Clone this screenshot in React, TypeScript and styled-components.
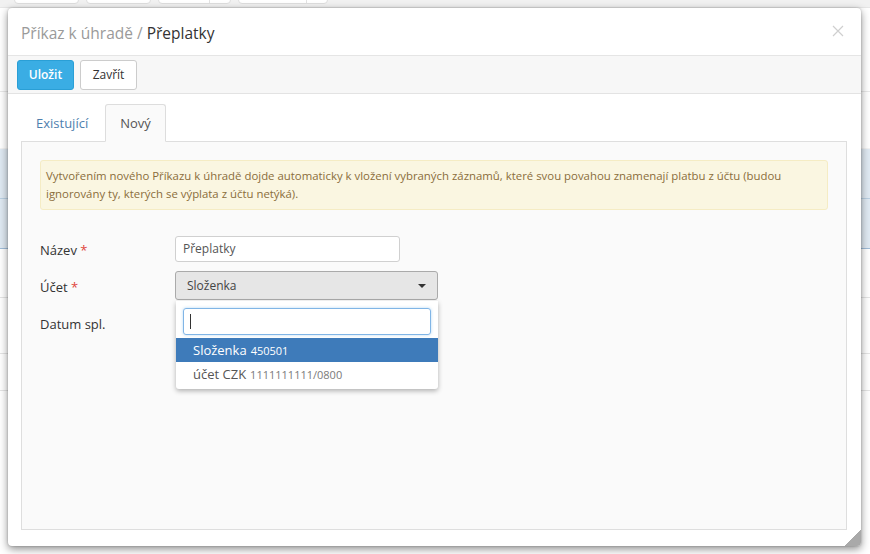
import React from "react";
import styled, { createGlobalStyle } from "styled-components";

const Global = createGlobalStyle`
  html, body { margin: 0; padding: 0; }
  body {
    background: #ffffff;
    font-family: "Open Sans", "Liberation Sans", sans-serif;
    width: 870px;
    height: 554px;
    overflow: hidden;
  }
  * { box-sizing: border-box; }
`;

const Page = styled.div`
  position: relative;
  width: 870px;
  height: 554px;
  overflow: hidden;
  background: #fff;
`;

const TopBar = styled.div`
  height: 8px;
  background: #f1f1f1;
  display: flex;
  align-items: flex-end;
  gap: 7px;
  padding: 0 0 3px 14px;
  overflow: hidden;
  border-bottom: 1px solid #e6e6e6;
`;

const GhostBtn = styled.div<{ $w: number; $split?: number }>`
  flex: none;
  width: ${(p) => p.$w}px;
  height: 24px;
  background: #fff;
  border: 1px solid #dedede;
  border-radius: 4px;
  position: relative;
  ${(p) =>
    p.$split
      ? `&::after{content:"";position:absolute;top:0;bottom:0;left:${p.$split}px;border-left:1px solid #e2e2e2;}`
      : ""}
`;

const Table = styled.div`
  display: flex;
  flex-direction: column;
`;

const BgRow = styled.div<{ $h: number; $blue?: boolean; $line?: string }>`
  height: ${(p) => p.$h}px;
  background: ${(p) => (p.$blue ? "#dfe9f2" : "#fff")};
  border-bottom: 1px solid ${(p) => p.$line || "#e4e4e4"};
`;

const Modal = styled.div`
  position: absolute;
  top: 8px;
  left: 8px;
  width: 853px;
  height: 538px;
  background: #fff;
  border-radius: 4px;
  box-shadow: 0 3px 9px rgba(0, 0, 0, 0.45), 0 0 2px rgba(0, 0, 0, 0.25);
  display: flex;
  flex-direction: column;
`;

const Header = styled.div`
  height: 48px;
  flex: none;
  display: flex;
  align-items: center;
  justify-content: space-between;
  padding: 2px 17px 0 13px;
  border-bottom: 1px solid #e5e5e5;
`;

const Title = styled.div`
  font-size: 15.5px;
  color: #333;
`;

const Muted = styled.span`
  color: #9a9a9a;
`;

const Close = styled.div`
  width: 12px;
  height: 12px;
  display: flex;
  margin-top: -4px;
`;

const Toolbar = styled.div`
  height: 38px;
  flex: none;
  background: #f7f7f7;
  border-bottom: 1px solid #e3e3e3;
  display: flex;
  align-items: center;
  gap: 6px;
  padding: 0 9px;
`;

const Button = styled.button<{ $primary?: boolean }>`
  height: 30px;
  width: 57px;
  padding: 0;
  font-family: inherit;
  font-size: 12px;
  border-radius: 3px;
  border: 1px solid ${(p) => (p.$primary ? "#2a9fd6" : "#ccc")};
  background: ${(p) => (p.$primary ? "#3aade4" : "#fff")};
  color: ${(p) => (p.$primary ? "#fff" : "#333")};
  font-weight: ${(p) => (p.$primary ? 600 : 400)};
`;

const Body = styled.div`
  flex: 1;
  display: flex;
  flex-direction: column;
  padding: 10px 14px 16px 13px;
`;

const Tabs = styled.div`
  display: flex;
  gap: 2px;
  height: 38px;
  flex: none;
  position: relative;
  z-index: 1;
  margin-bottom: -1px;
`;

const Tab = styled.div<{ $active?: boolean }>`
  height: 38px;
  padding: 0 14px;
  display: flex;
  align-items: center;
  font-size: 13px;
  color: ${(p) => (p.$active ? "#555" : "#4f7fae")};
  border: 1px solid ${(p) => (p.$active ? "#ddd" : "transparent")};
  border-bottom-color: ${(p) => (p.$active ? "#fafafa" : "transparent")};
  background: ${(p) => (p.$active ? "#fafafa" : "transparent")};
  border-radius: 3px 3px 0 0;
`;

const Pane = styled.div`
  flex: 1;
  background: #fafafa;
  border: 1px solid #dedede;
  padding: 18px 18px 0 18px;
`;

const Alert = styled.div`
  background: #faf6e1;
  border: 1px solid #f5ecc4;
  border-radius: 3px;
  color: #8a6d3b;
  font-size: 11.4px;
  line-height: 18px;
  padding: 6px 5px 6px 5px;
  margin-bottom: 20px;
`;

const Form = styled.div`
  display: flex;
  flex-direction: column;
`;

const FormRow = styled.div`
  display: grid;
  grid-template-columns: 135px 1fr;
  align-items: center;
  height: 37px;
`;

const Label = styled.div`
  font-size: 13px;
  color: #333;
  padding-top: 2px;
`;

const Req = styled.span`
  color: #e0453a;
`;

const TextInput = styled.div`
  width: 225px;
  height: 26px;
  border: 1px solid #d0d0d0;
  border-radius: 3px;
  background: #fff;
  font-size: 12px;
  color: #555;
  display: flex;
  align-items: center;
  padding-left: 7px;
`;

const SelectWrap = styled.div`
  position: relative;
  width: 263px;
`;

const Select = styled.div`
  height: 29px;
  border: 1px solid #aaa;
  border-radius: 3px;
  background: #e6e6e6;
  font-size: 12px;
  color: #444;
  display: flex;
  align-items: center;
  justify-content: space-between;
  padding: 0 11px 0 11px;
`;

const Caret = styled.span`
  width: 0;
  height: 0;
  border-left: 4px solid transparent;
  border-right: 4px solid transparent;
  border-top: 4px solid #333;
`;

const Dropdown = styled.div`
  position: absolute;
  top: 30px;
  left: 1px;
  right: 0;
  background: #fff;
  border-radius: 0 0 3px 3px;
  box-shadow: 0 2px 5px rgba(0, 0, 0, 0.3);
  padding-top: 7px;
  padding-bottom: 3px;
  z-index: 5;
`;

const Search = styled.div`
  margin: 0 7px 3px 7px;
  height: 27px;
  border: 1px solid #80b5e6;
  border-radius: 3px;
  box-shadow: 0 0 3px rgba(102, 175, 233, 0.5);
  display: flex;
  align-items: center;
  padding-left: 6px;
`;

const Cursor = styled.span`
  width: 1px;
  height: 15px;
  background: #333;
`;

const Option = styled.div<{ $active?: boolean }>`
  height: 24px;
  display: flex;
  align-items: center;
  gap: 4px;
  padding-left: 17px;
  font-size: 13px;
  background: ${(p) => (p.$active ? "#3e7bba" : "#fff")};
  color: ${(p) => (p.$active ? "#fff" : "#555")};
`;

const Sub = styled.span<{ $active?: boolean }>`
  font-size: 11px;
  color: ${(p) => (p.$active ? "#fff" : "#7a7a7a")};
`;

const Grip = styled.div`
  position: absolute;
  right: 0;
  bottom: 0;
  width: 16px;
  height: 16px;
  background: linear-gradient(135deg, transparent 50%, #a9a9a9 50%);
  border-bottom-right-radius: 4px;
`;

export default function App() {
  return (
    <Page>
      <Global />
      <TopBar>
        <GhostBtn $w={65} />
        <GhostBtn $w={65} />
        <GhostBtn $w={73} $split={50} />
        <GhostBtn $w={90} $split={67} />
      </TopBar>
      <Table>
        <BgRow $h={84} $line="#e9e9e9" />
        <BgRow $h={57} $line="#f3f3f3" />
        <BgRow $h={50} $blue $line="#b9cfe2" />
        <BgRow $h={50} $blue $line="#9fbcd8" />
        <BgRow $h={49} />
        <BgRow $h={56} />
        <BgRow $h={37} />
      </Table>
      <Modal>
        <Header>
          <Title>
            <Muted>Příkaz k úhradě / </Muted>Přeplatky
          </Title>
          <Close>
            <svg width="12" height="12" viewBox="0 0 12 12">
              <path d="M1 1L11 11M11 1L1 11" stroke="#cfcfcf" strokeWidth="1.2" />
            </svg>
          </Close>
        </Header>
        <Toolbar>
          <Button $primary>Uložit</Button>
          <Button>Zavřít</Button>
        </Toolbar>
        <Body>
          <Tabs>
            <Tab>Existující</Tab>
            <Tab $active>Nový</Tab>
          </Tabs>
          <Pane>
            <Alert>
              Vytvořením nového Příkazu k úhradě dojde automaticky k vložení vybraných záznamů, které svou povahou znamenají platbu z účtu (budou ignorovány ty, kterých se výplata z účtu netýká).
            </Alert>
            <Form>
              <FormRow>
                <Label>
                  Název <Req>*</Req>
                </Label>
                <TextInput>Přeplatky</TextInput>
              </FormRow>
              <FormRow>
                <Label>
                  Účet <Req>*</Req>
                </Label>
                <SelectWrap>
                  <Select>
                    Složenka
                    <Caret />
                  </Select>
                  <Dropdown>
                    <Search>
                      <Cursor />
                    </Search>
                    <Option $active>
                      Složenka <Sub $active>450501</Sub>
                    </Option>
                    <Option>
                      účet CZK <Sub>1111111111/0800</Sub>
                    </Option>
                  </Dropdown>
                </SelectWrap>
              </FormRow>
              <FormRow>
                <Label>Datum spl.</Label>
                <div />
              </FormRow>
            </Form>
          </Pane>
        </Body>
        <Grip />
      </Modal>
    </Page>
  );
}
